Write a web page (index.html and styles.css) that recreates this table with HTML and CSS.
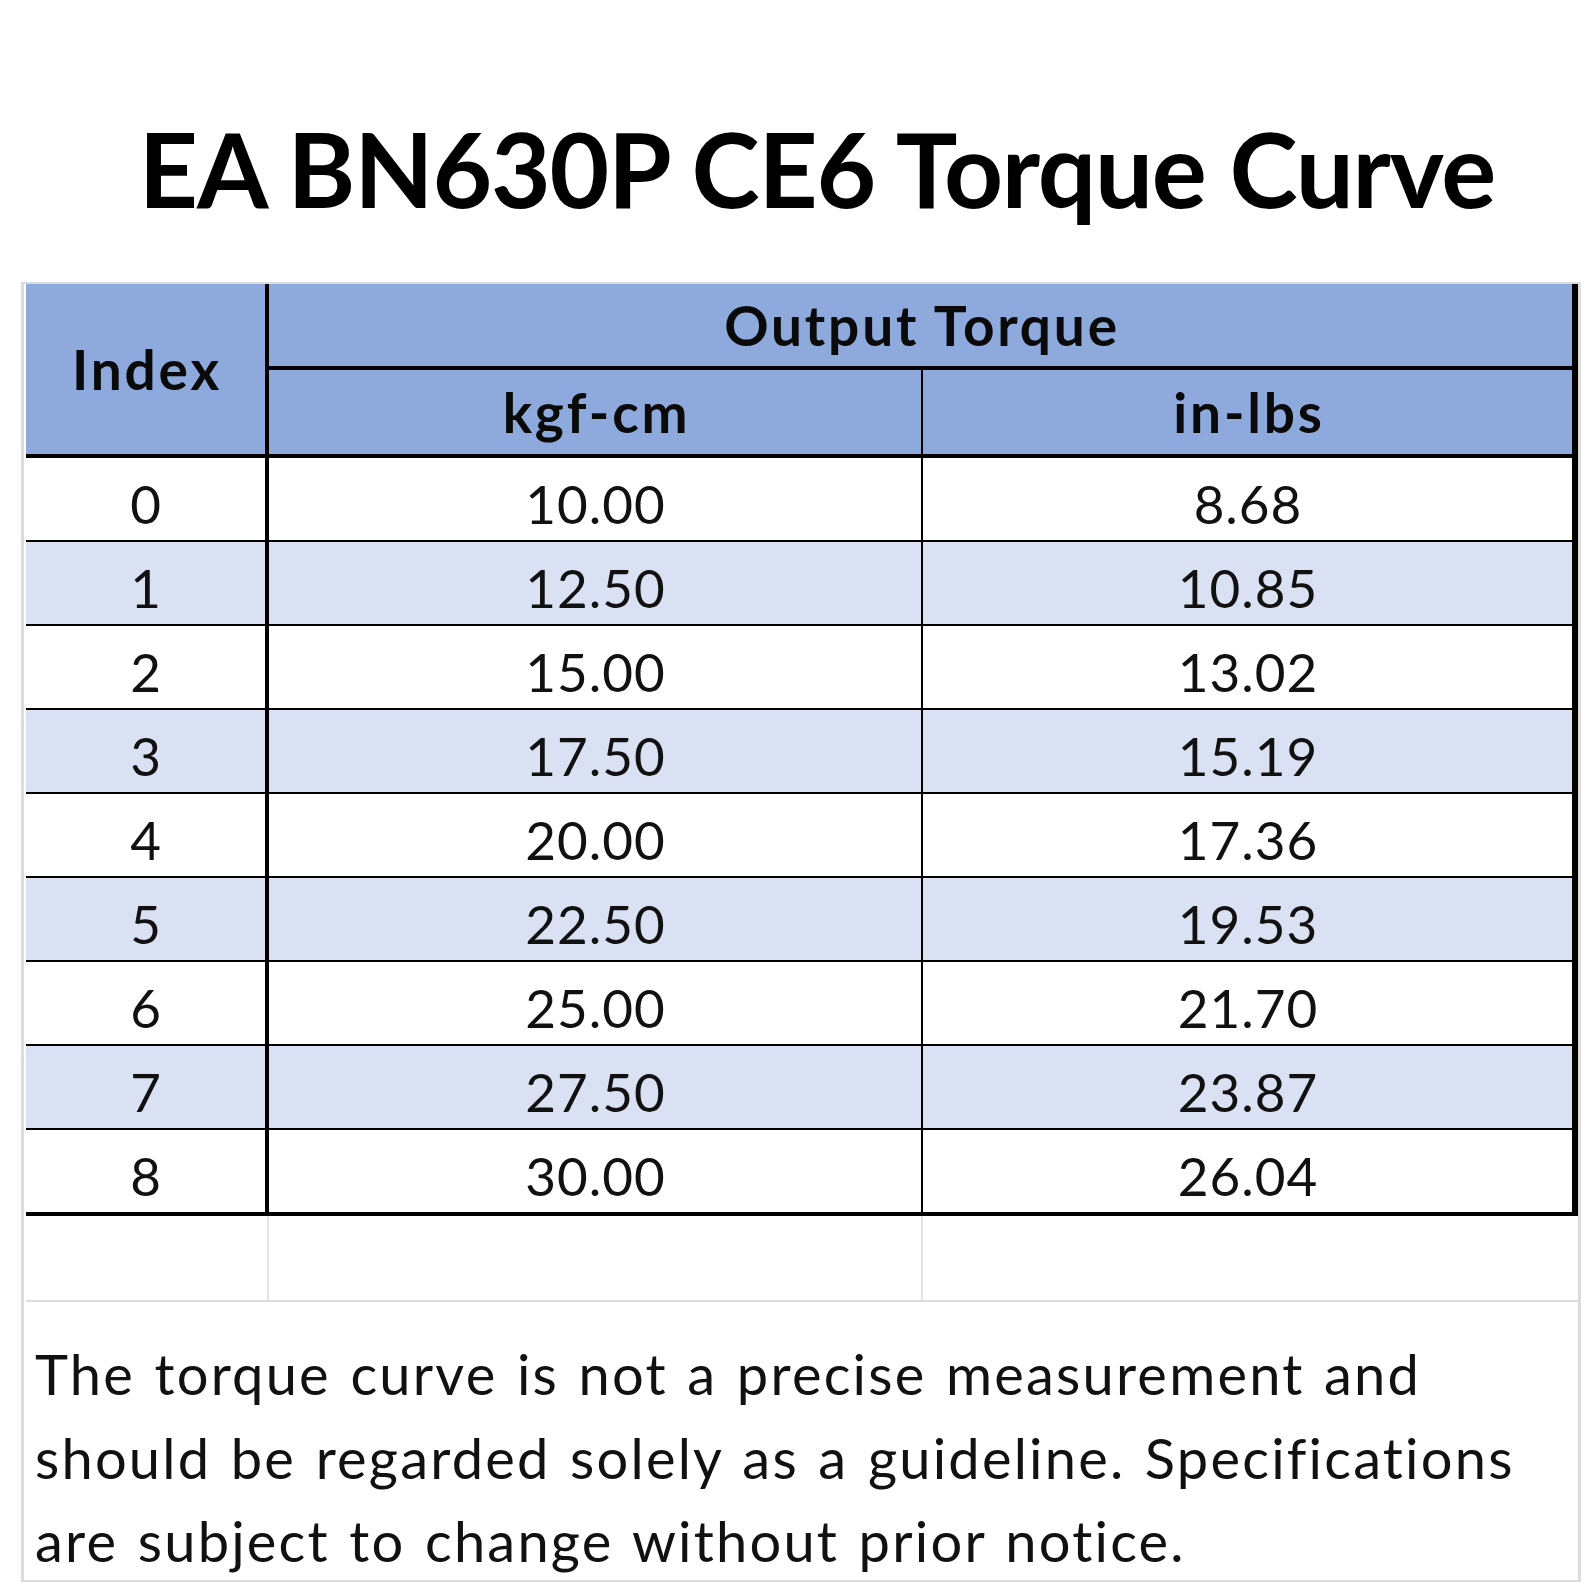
FILE: index.html
```html
<!DOCTYPE html>
<html lang="en">
<head>
<meta charset="utf-8">
<title>EA BN630P CE6 Torque Curve</title>
<link rel="stylesheet" href="styles.css">
</head>
<body>
<h1 class="title">EA BN630P CE6 Torque Curve</h1>
<div class="sheet">
  <table class="torque">
    <colgroup>
      <col class="col-index">
      <col class="col-kgf">
      <col class="col-in">
    </colgroup>
    <thead>
      <tr class="head-1">
        <th rowspan="2" class="h-index">Index</th>
        <th colspan="2" class="h-group">Output Torque</th>
      </tr>
      <tr class="head-2">
        <th class="h-kgf">kgf-cm</th>
        <th class="h-in">in-lbs</th>
      </tr>
    </thead>
    <tbody>
      <tr><td>0</td><td>10.00</td><td>8.68</td></tr>
      <tr class="alt"><td>1</td><td>12.50</td><td>10.85</td></tr>
      <tr><td>2</td><td>15.00</td><td>13.02</td></tr>
      <tr class="alt"><td>3</td><td>17.50</td><td>15.19</td></tr>
      <tr><td>4</td><td>20.00</td><td>17.36</td></tr>
      <tr class="alt"><td>5</td><td>22.50</td><td>19.53</td></tr>
      <tr><td>6</td><td>25.00</td><td>21.70</td></tr>
      <tr class="alt"><td>7</td><td>27.50</td><td>23.87</td></tr>
      <tr class="last"><td>8</td><td>30.00</td><td>26.04</td></tr>
    </tbody>
  </table>
  <div class="blank-row">
    <div class="blank-cell"></div>
    <div class="blank-cell"></div>
    <div class="blank-cell blank-end"></div>
  </div>
  <p class="note">The torque curve is not a precise measurement and<br>should be regarded solely as a guideline. Specifications<br>are subject to change without prior notice.</p>
</div>
</body>
</html>
```

FILE: styles.css
```css
html, body {
  margin: 0;
  padding: 0;
  background: #ffffff;
}

body {
  font-family: Lato, "Liberation Sans", sans-serif;
  color: #000000;
}

.title {
  margin: 0;
  height: 282px;
  box-sizing: border-box;
  padding: 54px 0 0 44px;
  display: flex;
  align-items: center;
  justify-content: center;
  font-size: 103px;
  font-weight: 700;
  letter-spacing: -1.2px;
  line-height: 1;
  white-space: nowrap;
}

.sheet {
  margin-left: 21px;
  width: 1560px;
  box-sizing: border-box;
  border: 2px solid #dcdcdc;
  border-left-width: 3px;
  border-right-width: 3px;
  border-bottom-width: 2px;
}

.torque {
  margin-left: 2px;
  width: 1552px;
  table-layout: fixed;
  border-collapse: separate;
  border-spacing: 0;
  font-size: 53px;
}

.col-index { width: 243px; }
.col-kgf { width: 654px; }
.col-in { width: 655px; }

.torque th,
.torque td {
  box-sizing: border-box;
  padding: 0;
  text-align: center;
  vertical-align: middle;
  line-height: 1;
}

.torque th {
  background: #8ea9db;
  font-weight: 700;
  font-size: 55px;
  letter-spacing: 2.8px;
  padding-left: 3px;
  color: #0a0a0a;
}

.h-index {
  border-right: 4px solid #000;
  border-bottom: 4px solid #000;
  padding-top: 6px;
}

.h-group {
  height: 86px;
  border-right: 6px solid #000;
  border-bottom: 4px solid #000;
  padding-top: 4px;
}

.h-kgf {
  height: 88px;
  border-right: 2px solid #000;
  border-bottom: 4px solid #000;
  padding-top: 4px;
}

.h-in {
  height: 88px;
  border-right: 6px solid #000;
  border-bottom: 4px solid #000;
  padding-top: 4px;
}

.torque td {
  height: 84px;
  border-bottom: 2px solid #000;
  font-weight: 400;
  letter-spacing: 1px;
  padding-left: 1px;
  padding-top: 8px;
  color: #111111;
}

.torque td:nth-child(1) { border-right: 4px solid #000; }
.torque td:nth-child(2) { border-right: 2px solid #000; }
.torque td:nth-child(3) { border-right: 6px solid #000; }

.torque tr.alt td { background: #d9e1f2; }

.torque tr.last td {
  height: 86px;
  border-bottom-width: 4px;
}

.blank-row {
  display: grid;
  grid-template-columns: 243px 654px 655px;
  margin-left: 2px;
  height: 86px;
  box-sizing: border-box;
  border-bottom: 2px solid #dcdcdc;
}

.blank-cell {
  box-sizing: border-box;
  border-right: 2px solid #e2e2e2;
}

.blank-end {
  border-right: none;
}

.note {
  margin: 0;
  height: 278px;
  box-sizing: border-box;
  padding: 30px 0 0 11px;
  font-size: 56px;
  line-height: 83.5px;
  letter-spacing: 2.2px;
  word-spacing: 3px;
  white-space: nowrap;
  color: #111111;
}
```
